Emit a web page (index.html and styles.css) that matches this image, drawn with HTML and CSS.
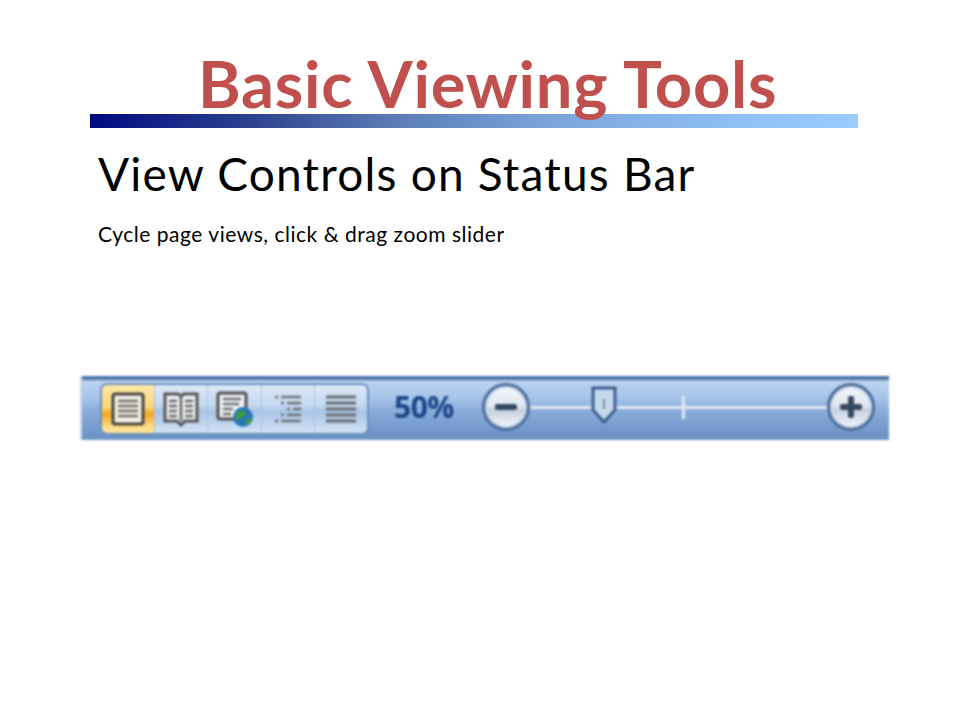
FILE: index.html
```html
<!DOCTYPE html>
<html lang="en">
<head>
<meta charset="utf-8">
<title>Basic Viewing Tools</title>
<link rel="stylesheet" href="styles.css">
</head>
<body>
<main class="slide">
  <h1 class="title">Basic Viewing Tools</h1>
  <div class="rule"></div>
  <h2 class="subtitle">View Controls on Status Bar</h2>
  <p class="note">Cycle page views, click &amp; drag zoom slider</p>
  <div class="statusbar">
    <div class="views">
      <div class="view active">
        <svg width="36" height="36" viewBox="0 0 36 36"><rect x="3" y="3" width="30" height="30" rx="2" fill="#f4f0e6" stroke="#45433f" stroke-width="3"/><path d="M8 10h20M8 15h20M8 20h20M8 25h20" stroke="#6e6c66" stroke-width="2.6"/></svg>
      </div>
      <div class="view">
        <svg width="36" height="36" viewBox="0 0 36 36"><path d="M2 3h13l3 2 3-2h13v27H22l-4 4-4-4H2z" fill="#eef1f4" stroke="#555" stroke-width="3"/><path d="M18 5v25M6 10h8M6 15h8M6 20h8M6 25h8M22 10h8M22 15h8M22 20h8M22 25h8" stroke="#666" stroke-width="2.6"/></svg>
      </div>
      <div class="view">
        <svg width="38" height="36" viewBox="0 0 38 36"><rect x="2" y="2" width="28" height="26" rx="2" fill="#eef1f4" stroke="#4f4f4f" stroke-width="3"/><path d="M7 8h18M7 13h16M7 18h10M7 23h8" stroke="#707070" stroke-width="2.4"/><circle cx="27" cy="26" r="10" fill="#2878b8"/><path d="M20 23c3-4 7-4 9-2s-1 5-4 6-3 4-5 1zM30 29c2-2 4-2 6-1-1 4-4 6-6 6z" fill="#3d9a40"/></svg>
      </div>
      <div class="view">
        <svg width="30" height="30" viewBox="0 0 30 30"><path d="M8 3h20M14 9h14M20 15h8M14 21h14M8 27h20" stroke="#6c7074" stroke-width="2.6"/><path d="M2 3h3M8 9h3M14 15h3M8 21h3M2 27h3" stroke="#6c7278" stroke-width="2.6"/></svg>
      </div>
      <div class="view">
        <svg width="30" height="30" viewBox="0 0 30 30"><path d="M0 3h30M0 9h30M0 15h30M0 21h30M0 27h30" stroke="#666a6e" stroke-width="3"/></svg>
      </div>
    </div>
    <span class="zoom-level">50%</span>
    <div class="zoom">
      <button class="round" type="button"><span class="minus"></span></button>
      <div class="track">
        <svg class="thumb" width="28" height="40" viewBox="0 0 28 40"><path d="M3 3h22v22L14 37 3 25z" fill="#c6d8ee" stroke="#3d5f8e" stroke-width="3"/><path d="M14 14v10" stroke="#7a8ca6" stroke-width="2"/></svg>
        <span class="tick"></span>
      </div>
      <button class="round" type="button"><span class="minus"></span><span class="plus-bar"></span></button>
    </div>
  </div>
</main>
</body>
</html>
```
FILE: styles.css
```css
* { box-sizing: border-box; }
html, body { margin: 0; background: #fff; }
.slide {
  width: 960px;
  height: 720px;
  padding-top: 45px;
  font-family: Lato, "Open Sans", sans-serif;
  color: #000;
  overflow: hidden;
}
.title {
  margin: 0;
  height: 69px;
  padding-left: 198px;
  font-size: 65px;
  line-height: 76px;
  letter-spacing: 0.75px;
  font-weight: 700;
  color: #c0504d;
  white-space: nowrap;
}
.rule {
  width: 768px;
  height: 14px;
  margin-left: 90px;
  background: linear-gradient(90deg, #000a80 0%, #2b3f8c 20%, #5a7db5 40%, #7ca5da 60%, #8fc0f5 85%, #99ccff 100%);
}
.subtitle {
  margin: 20px 0 0 98px;
  font-size: 46px;
  line-height: 52px;
  letter-spacing: 1.2px;
  font-weight: 400;
  white-space: nowrap;
}
.note {
  margin: 22px 0 0 98px;
  font-size: 21px;
  line-height: 24px;
  letter-spacing: 0.52px;
  white-space: nowrap;
}
.statusbar {
  display: flex;
  align-items: flex-start;
  width: 809px;
  height: 64px;
  margin: 130px 0 0 80px;
  padding: 7px 0 0 18px;
  background: linear-gradient(180deg, #4b74a8 0, #4b74a8 3px, #bcd4f0 5px, #a6c4ea 22px, #8aaddb 34px, #6d93c5 60px, #7198ca 64px);
  border-left: 2px solid #c5d6ec;
  filter: blur(1px);
}
.views {
  display: flex;
  flex: none;
  width: 269px;
  height: 52px;
  border: 2px solid #6d8fbe;
  border-radius: 7px;
  background: linear-gradient(180deg, #dbe8f8 0, #c8dbf2 40%, #a9c5e6 55%, #d2e2f5 100%);
  overflow: hidden;
}
.view {
  flex: 1;
  display: flex;
  align-items: center;
  justify-content: center;
  border-right: 1px solid #aac3e2;
}
.view:last-child { border-right: 0; }
.view.active {
  background: linear-gradient(180deg, #fde9a8 0, #fcd67c 45%, #f6a820 60%, #fdd880 85%, #fee6a0 100%);
}
.zoom-level {
  flex: none;
  width: 62px;
  margin: 5px 0 0 25px;
  font-family: "Open Sans", sans-serif;
  font-size: 30px;
  line-height: 38px;
  font-weight: 700;
  letter-spacing: -0.5px;
  color: #1c4587;
}
.zoom {
  display: flex;
  align-items: center;
  flex: none;
  width: 393px;
  height: 48px;
  margin-left: 26px;
}
.round {
  position: relative;
  flex: none;
  width: 48px;
  height: 48px;
  padding: 0;
  border: 3px solid #4d6d99;
  border-radius: 50%;
  background: linear-gradient(180deg, #f3f6fb 0, #dfe6f0 50%, #c3cede 55%, #f6f8fb 100%);
  box-shadow: 0 0 0 2px #c3d5ec inset;
}
.minus, .plus-bar {
  position: absolute;
  left: 10px;
  top: 18px;
  width: 22px;
  height: 6px;
  border-radius: 2px;
  background: #36475e;
}
.plus-bar {
  left: 18px;
  top: 10px;
  width: 6px;
  height: 22px;
}
.track {
  position: relative;
  flex: 1;
  height: 3px;
  background: #dfe8f4;
}
.thumb {
  position: absolute;
  left: 60px;
  top: -21px;
}
.tick {
  position: absolute;
  left: 152px;
  top: -10px;
  width: 3px;
  height: 23px;
  background: #dfe8f4;
}
```
